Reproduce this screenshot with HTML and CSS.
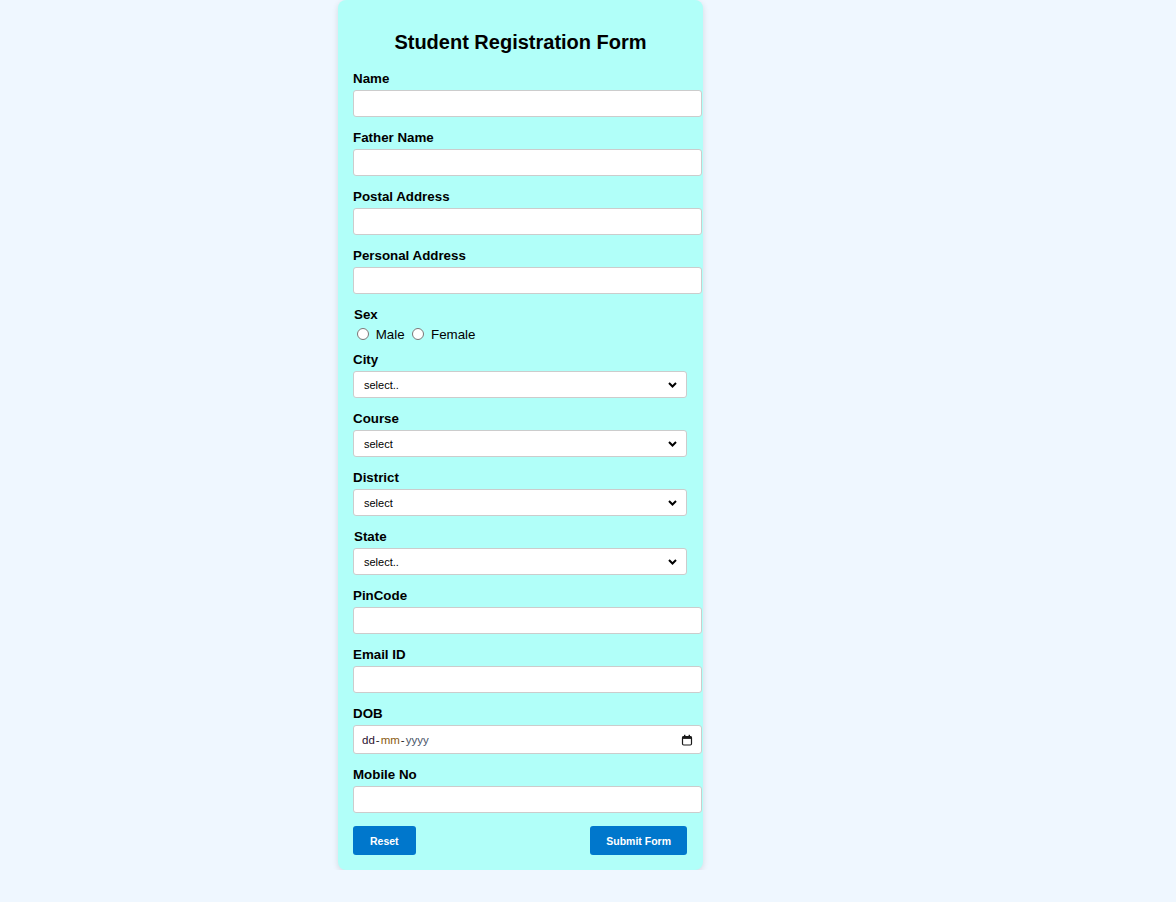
FILE: index.html
```html
<!DOCTYPE html>
<html lang="en">
<head>
<meta charset="utf-8">
<title>Student Registration Form</title>
<link rel="stylesheet" href="styles.css">
</head>
<body>
<div class="card">
  <h2 class="title">Student Registration Form</h2>
  <form class="form">
    <div class="field">
      <label class="lbl">Name</label>
      <input class="txt" type="text">
    </div>
    <div class="field">
      <label class="lbl">Father Name</label>
      <input class="txt" type="text">
    </div>
    <div class="field">
      <label class="lbl">Postal Address</label>
      <input class="txt" type="text">
    </div>
    <div class="field">
      <label class="lbl">Personal Address</label>
      <input class="txt" type="text">
    </div>
    <div class="field field-sex">
      <label class="lbl lbl-shift">Sex</label>
      <div class="radios">
        <input class="radio" type="radio" name="sex" id="male"> <label class="rlbl" for="male">Male</label>
        <input class="radio" type="radio" name="sex" id="female"> <label class="rlbl" for="female">Female</label>
      </div>
    </div>
    <div class="field">
      <label class="lbl">City</label>
      <div class="sel-wrap">
        <select class="sel"><option>select..</option></select>
        <svg class="chev" width="9" height="6" viewBox="0 0 9 6" aria-hidden="true"><path d="M1 1 L4.5 4.5 L8 1" fill="none" stroke="#000" stroke-width="2"/></svg>
      </div>
    </div>
    <div class="field">
      <label class="lbl">Course</label>
      <div class="sel-wrap">
        <select class="sel"><option>select</option></select>
        <svg class="chev" width="9" height="6" viewBox="0 0 9 6" aria-hidden="true"><path d="M1 1 L4.5 4.5 L8 1" fill="none" stroke="#000" stroke-width="2"/></svg>
      </div>
    </div>
    <div class="field">
      <label class="lbl">District</label>
      <div class="sel-wrap">
        <select class="sel"><option>select</option></select>
        <svg class="chev" width="9" height="6" viewBox="0 0 9 6" aria-hidden="true"><path d="M1 1 L4.5 4.5 L8 1" fill="none" stroke="#000" stroke-width="2"/></svg>
      </div>
    </div>
    <div class="field">
      <label class="lbl lbl-shift">State</label>
      <div class="sel-wrap">
        <select class="sel"><option>select..</option></select>
        <svg class="chev" width="9" height="6" viewBox="0 0 9 6" aria-hidden="true"><path d="M1 1 L4.5 4.5 L8 1" fill="none" stroke="#000" stroke-width="2"/></svg>
      </div>
    </div>
    <div class="field">
      <label class="lbl">PinCode</label>
      <input class="txt" type="text">
    </div>
    <div class="field">
      <label class="lbl">Email ID</label>
      <input class="txt" type="text">
    </div>
    <div class="field">
      <label class="lbl">DOB</label>
      <div class="date">
        <span class="date-text"><span class="d-dd">dd</span><span class="d-sep">-</span><span class="d-mm">mm</span><span class="d-sep">-</span><span class="d-yy">yyyy</span></span>
        <svg class="cal" width="12" height="12" viewBox="0 0 12 12" aria-hidden="true">
          <rect x="1.5" y="2.5" width="9" height="8.5" rx="1.2" fill="none" stroke="#1a1a1a" stroke-width="1.2"/>
          <rect x="1.5" y="2.5" width="9" height="2.4" fill="#1a1a1a"/>
          <rect x="3" y="0.8" width="1.4" height="2.2" fill="#1a1a1a"/>
          <rect x="7.6" y="0.8" width="1.4" height="2.2" fill="#1a1a1a"/>
        </svg>
      </div>
    </div>
    <div class="field">
      <label class="lbl">Mobile No</label>
      <input class="txt" type="text">
    </div>
    <div class="actions">
      <button class="btn" type="reset">Reset</button>
      <button class="btn btn-submit" type="submit">Submit Form</button>
    </div>
  </form>
</div>
</body>
</html>
```

FILE: styles.css
```css
html, body {
  margin: 0;
  padding: 0;
}
body {
  background: #eff7ff;
  font-family: "Liberation Sans", Arial, sans-serif;
  color: #000;
}
.card {
  width: 335px;
  margin-left: 338px;
  padding: 15px;
  background: #b1fff9;
  border-radius: 8px;
  box-shadow: 0 2px 6px rgba(0, 0, 0, 0.12);
}
.title {
  font-size: 20px;
  font-weight: bold;
  text-align: center;
  margin: 15.6px 0 17.6px;
}
.form {
  margin: 0;
}
.field {
  margin-bottom: 13px;
}
.lbl {
  display: block;
  font-size: 13.33px;
  font-weight: bold;
  margin-bottom: 4px;
  color: #000;
}
.lbl-shift {
  margin-left: 1px;
}
.txt {
  display: block;
  width: 100%;
  box-sizing: content-box;
  padding: 5px 6px;
  border: 1px solid #ccc;
  border-radius: 3px;
  font-family: "Liberation Sans", Arial, sans-serif;
  font-size: 13.33px;
  background: #fff;
  margin: 0;
}
.field-sex {
  margin-bottom: 9px;
}
.field-sex .lbl {
  margin-bottom: 3px;
}
.radios {
  font-size: 13.33px;
  line-height: 16px;
}
.radio {
  margin: 3px 3px 0 4px;
  width: 12px;
  height: 12px;
  vertical-align: -1px;
}
.rlbl {
  font-size: 13.33px;
}
.sel-wrap {
  position: relative;
  width: 334px;
}
.sel {
  display: block;
  width: 100%;
  height: 27px;
  box-sizing: border-box;
  padding: 0 24px 0 10px;
  border: 1px solid #ccc;
  border-radius: 3px;
  font-family: "Liberation Sans", Arial, sans-serif;
  font-size: 11px;
  background-color: #fff;
  color: #000;
  margin: 0;
  appearance: none;
  -webkit-appearance: none;
}
.chev {
  position: absolute;
  right: 10px;
  top: 11px;
  pointer-events: none;
}
.date {
  display: flex;
  align-items: center;
  justify-content: space-between;
  width: calc(100% + 14px);
  height: 29px;
  box-sizing: border-box;
  padding: 0 8px 0 8px;
  border: 1px solid #ccc;
  border-radius: 3px;
  background: #fff;
}
.date-text {
  font-size: 11.5px;
}
.d-dd { color: #2a1030; }
.d-mm { color: #8a5a10; }
.d-yy { color: #4a5568; }
.d-sep {
  margin: 0 1px;
  color: #222;
}
.cal {
  display: block;
}
.actions {
  display: flex;
  justify-content: space-between;
  align-items: center;
  width: 334px;
}
.btn {
  height: 29px;
  padding: 0 17px;
  border: none;
  border-radius: 3px;
  background: #0077cc;
  color: #fff;
  font-family: "Liberation Sans", Arial, sans-serif;
  font-size: 10.5px;
  font-weight: bold;
  cursor: pointer;
}
.btn-submit {
  padding: 0 16px;
}
```
